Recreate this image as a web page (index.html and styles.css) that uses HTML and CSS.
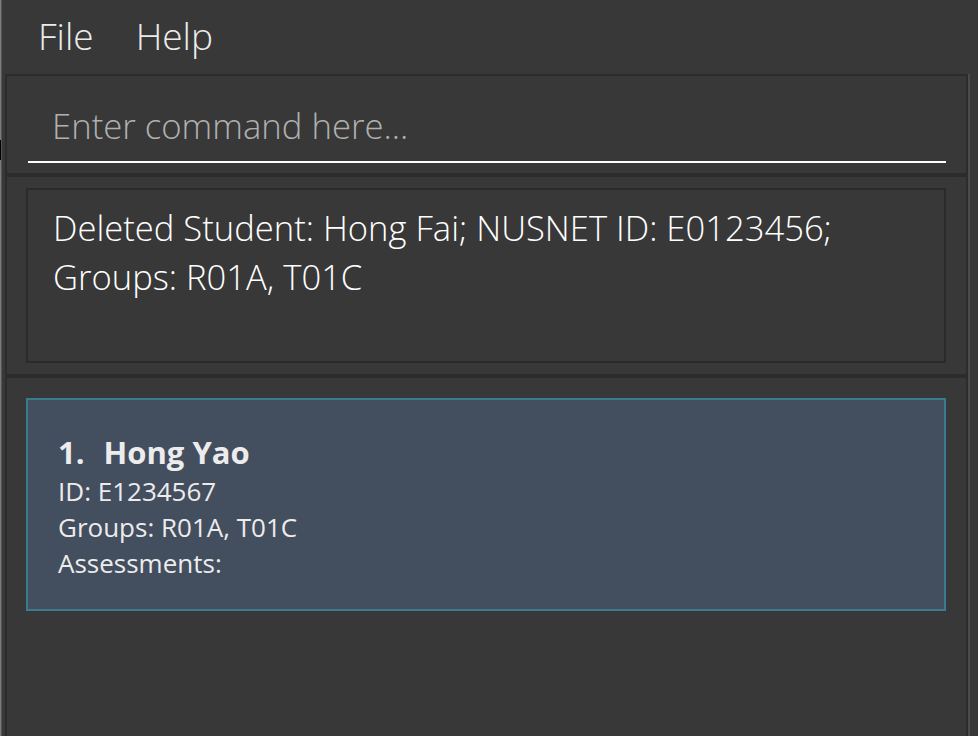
FILE: index.html
```html
<!DOCTYPE html>
<html>
<head>
<meta charset="utf-8">
<link rel="stylesheet" href="styles.css">
</head>
<body>
<div class="app">
  <div class="edge"><div class="edge-mark"></div></div>
  <div class="main">
    <div class="menubar">
      <span class="menu-item">File</span>
      <span class="menu-item">Help</span>
    </div>
    <div class="content">
      <div class="panel cmd">
        <div class="cmd-field">Enter command here...</div>
      </div>
      <div class="panel result">
        <div class="result-box">Deleted Student: Hong Fai; NUSNET ID: E0123456;<br>Groups: R01A, T01C</div>
      </div>
      <div class="panel list">
        <div class="card">
          <div class="card-title"><span class="card-index">1.</span><span>Hong Yao</span></div>
          <div class="card-line">ID: E1234567</div>
          <div class="card-line">Groups: R01A, T01C</div>
          <div class="card-line">Assessments:</div>
        </div>
      </div>
    </div>
  </div>
</div>
</body>
</html>
```
FILE: styles.css
```css
html, body {
  margin: 0;
  padding: 0;
  background: #383838;
  overflow: hidden;
}
body {
  font-family: "Open Sans", "Noto Sans", sans-serif;
  color: #ffffff;
}
.app {
  display: flex;
  height: 736px;
  width: 978px;
}
.edge {
  width: 1px;
  background: #7c7c7c;
  border-right: 1px solid #555555;
  position: relative;
}
.edge-mark {
  position: absolute;
  left: 0;
  top: 140px;
  width: 1px;
  height: 20px;
  background: #000;
}
.main {
  flex: 1;
  display: flex;
  flex-direction: column;
  min-width: 0;
}
.menubar {
  height: 74px;
  display: flex;
  align-items: center;
  gap: 42px;
  padding-left: 36px;
  box-sizing: border-box;
}
.menu-item {
  font-size: 37px;
  font-weight: 300;
  color: #ececec;
  line-height: 1;
  padding-bottom: 4px;
}
.content {
  flex: 1;
  display: flex;
  flex-direction: column;
  margin-left: 3px;
  margin-right: 8px;
  border-right: 2px solid #4b4b4b;
  min-height: 0;
}
.panel {
  border: 2px solid #2c2c2c;
  box-sizing: border-box;
}
.cmd {
  height: 101px;
  padding: 0 20px 10px 21px;
  display: flex;
  align-items: flex-end;
}
.cmd-field {
  flex: 1;
  border-bottom: 2px solid #ffffff;
  font-size: 34.7px;
  font-weight: 300;
  color: #b0b0b0;
  padding: 0 0 14px 24px;
  line-height: 1.2;
}
.result {
  height: 201px;
  padding: 11px 20px 11px 19px;
  display: flex;
}
.result-box {
  flex: 1;
  border: 2px solid #2a2a2a;
  padding: 13px 25px;
  font-size: 34.6px;
  font-weight: 300;
  line-height: 49px;
  color: #ffffff;
}
.list {
  flex: 1;
  padding: 20px 20px 0 19px;
  border-bottom: none;
}
.card {
  height: 213px;
  box-sizing: border-box;
  background: #434e5f;
  border: 2px solid #3b7b8f;
  padding: 31px 30px;
  color: #ececec;
}
.card-title {
  font-size: 31px;
  font-weight: 700;
  line-height: 42px;
  display: flex;
  gap: 19px;
}
.card-line {
  font-size: 26px;
  line-height: 36px;
}
```
